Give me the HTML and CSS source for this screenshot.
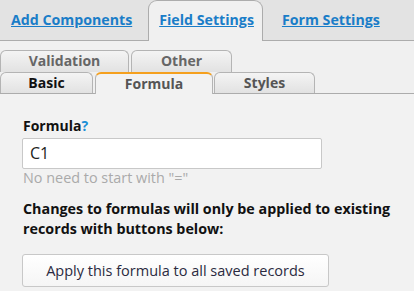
FILE: index.html
```html
<!DOCTYPE html>
<html>
<head>
<meta charset="utf-8">
<link rel="stylesheet" href="styles.css">
</head>
<body>
<div class="topnav">
  <a class="toptab" href="#">Add Components</a>
  <a class="toptab active" href="#">Field Settings</a>
  <a class="toptab" href="#">Form Settings</a>
</div>
<div class="subtabs">
  <div class="row row1">
    <div class="stab w-validation muted">Validation</div>
    <div class="stab w-other muted">Other</div>
  </div>
  <div class="row row2">
    <div class="stab w-basic dark">Basic</div>
    <div class="stab w-formula selected">Formula</div>
    <div class="stab w-styles">Styles</div>
  </div>
</div>
<div class="content">
  <div class="label">Formula<span class="help">?</span></div>
  <div class="input">C1</div>
  <div class="hint">No need to start with "="</div>
  <p class="note">Changes to formulas will only be applied to existing records with buttons below:</p>
  <button class="btn">Apply this formula to all saved records</button>
</div>
</body>
</html>
```
FILE: styles.css
```css
html, body {
  margin: 0;
  padding: 0;
}
body {
  background: #f2f2f2;
  font-family: "Open Sans", "Noto Sans", sans-serif;
  width: 414px;
  height: 291px;
  overflow: hidden;
}
.topnav {
  height: 40px;
  background: #e3e3e3;
  border-bottom: 1px solid #acacac;
  display: flex;
  align-items: flex-end;
}
.toptab {
  box-sizing: border-box;
  height: 40px;
  line-height: 38px;
  font-size: 14.2px;
  font-weight: 700;
  color: #1a7dc8;
  text-decoration: underline;
  padding: 0 10px;
  margin-right: 5px;
  border: 1px solid transparent;
  border-bottom: none;
}
.toptab.active {
  background: #f0f0f0;
  border-color: #acacac;
  border-radius: 9px 9px 0 0;
  height: 41px;
  margin-bottom: -1px;
  padding: 0 8px 0 10px;
  margin-right: 8px;
}
.subtabs {
  background: #f0f0f0;
  padding-top: 9px;
  border-bottom: 1px solid #acacac;
}
.row {
  display: flex;
  height: 22px;
}
.row2 {
  height: 21px;
}
.stab {
  box-sizing: border-box;
  height: 22px;
  border: 1px solid #b4b4b4;
  border-bottom: none;
  border-radius: 6px 6px 0 0;
  background: linear-gradient(#f4f4f4, #e2e2e2);
  font-size: 14px;
  font-weight: 700;
  color: #555;
  text-align: center;
  line-height: 20px;
}
.row2 .stab {
  height: 21px;
}
.muted { color: #666; }
.dark { color: #111; }
.w-validation { width: 129px; margin-right: 2px; }
.w-other { width: 101px; }
.w-basic { width: 93px; margin-right: 2px; }
.w-formula {
  width: 118px;
  margin-right: 1px;
}
.w-styles { width: 101px; }
.stab.selected {
  background: #f2f2f2;
  border-top: 2px solid #f5a01e;
  height: 22px;
  margin-bottom: -1px;
  line-height: 19px;
  color: #555;
}
.content {
  padding: 23px 8px 0 22px;
}
.label {
  font-size: 14px;
  font-weight: 700;
  color: #111;
  line-height: 18px;
  padding-left: 1px;
}
.help {
  color: #1a8fd6;
}
.input {
  box-sizing: border-box;
  width: 300px;
  height: 31px;
  margin-top: 3px;
  background: #fff;
  border: 1px solid #c8c8c8;
  border-radius: 2px;
  font-size: 16px;
  line-height: 29px;
  padding-left: 7px;
  color: #222;
}
.hint {
  font-size: 14.4px;
  color: #aaa;
  line-height: 18px;
  margin-top: 0;
  padding-left: 1px;
}
.note {
  margin: 12px 0 0 0;
  font-size: 14.3px;
  font-weight: 700;
  color: #111;
  line-height: 19.5px;
  padding-left: 1px;
}
.btn {
  display: block;
  box-sizing: border-box;
  margin-top: 16px;
  width: 307px;
  height: 33px;
  background: linear-gradient(#ffffff, #f5f5f5);
  border: 1px solid #c8c8c8;
  border-radius: 3px;
  font-family: "Open Sans", "Noto Sans", sans-serif;
  font-size: 14.5px;
  color: #2a2a40;
  padding: 0;
}
```
